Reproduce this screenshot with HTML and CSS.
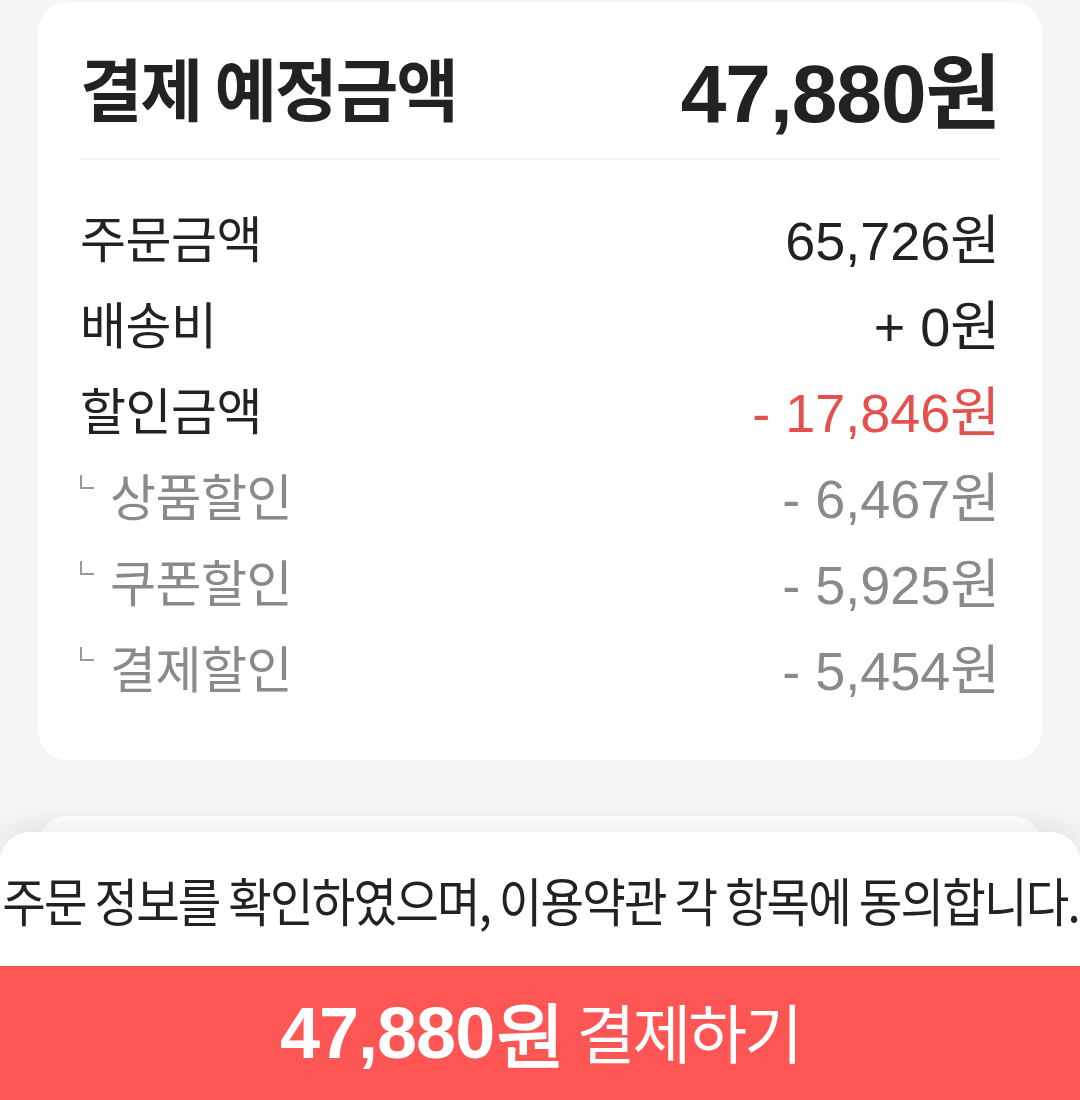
FILE: index.html
```html
<!DOCTYPE html>
<html>
    <head lang="ko">
        <meta charset="UTF-8">
        <title>결제</title>
        <link rel="stylesheet" href="styles.css">
    </head>
    <body>
        <div id="page">
            <div class="card">
                <div class="total">
                    <span class="total-label">결제 예정금액</span>
                    <span class="total-price">47,880원</span>
                </div>
                <ul class="list">
                    <li><span class="name">주문금액</span><span class="price">65,726원</span></li>
                    <li><span class="name">배송비</span><span class="price">+ 0원</span></li>
                    <li class="sale"><span class="name">할인금액</span><span class="price">- 17,846원</span></li>
                    <li class="sub"><span class="name"><i class="mark"></i>상품할인</span><span class="price">- 6,467원</span></li>
                    <li class="sub"><span class="name"><i class="mark"></i>쿠폰할인</span><span class="price">- 5,925원</span></li>
                    <li class="sub"><span class="name"><i class="mark"></i>결제할인</span><span class="price">- 5,454원</span></li>
                </ul>
            </div>
            <div class="card next"></div>
        </div>
        <div id="sheet">
            <p class="agree"><span>주문 정보를 확인하였으며, 이용약관 각 항목에 동의합니다.</span></p>
            <button class="pay"><b>47,880원</b> 결제하기</button>
        </div>
    </body>
</html>
```

FILE: styles.css
```css
*{
    margin:0;
    padding:0;
    box-sizing:border-box;
}
ul{
    list-style:none;
}
html,body{
    height:1100px;
    overflow:hidden;
}
body{
    background:#f5f5f5;
    font-family:"Liberation Sans","Noto Sans CJK KR",sans-serif;
    color:#222;
}
#page{
    padding:2px 38px 0;
    display:flex;
    flex-direction:column;
    gap:56px;
}
.card{
    background:#fff;
    border-radius:30px;
    padding:0 42px 51px 42px;
}
.card.next{
    height:300px;
}
.total{
    display:flex;
    justify-content:space-between;
    align-items:center;
    height:158px;
    padding-top:12px;
    border-bottom:2px solid #f2f2f2;
}
.total-label{
    font-family:"Noto Sans CJK KR",sans-serif;
    font-size:68px;
    font-weight:700;
    letter-spacing:-2px;
}
.total-price{
    font-size:82px;
    font-weight:700;
    letter-spacing:-1px;
}
.list{
    padding-top:33px;
}
.list li{
    display:flex;
    justify-content:space-between;
    align-items:center;
    height:86px;
    font-size:54px;
}
.list .name{
    font-family:"Noto Sans CJK KR",sans-serif;
    font-size:50px;
    letter-spacing:-0.5px;
    display:flex;
    align-items:center;
}
.list .sale .price{
    color:#e5504f;
}
.list .sub{
    color:#8a8a8a;
}
.mark{
    width:14px;
    height:14px;
    border-left:2px solid #999;
    border-bottom:2px solid #999;
    margin:0 16px 24px 0;
}
#sheet{
    position:fixed;
    left:0;
    right:0;
    bottom:0;
    height:268px;
    background:#fff;
    border-radius:30px 30px 0 0;
    box-shadow:0 -8px 26px rgba(0,0,0,0.07);
    display:flex;
    flex-direction:column;
}
.agree{
    height:134px;
    display:flex;
    align-items:center;
    justify-content:center;
    overflow:hidden;
}
.agree span{
    display:inline-block;
    white-space:nowrap;
    font-family:"Noto Sans CJK KR",sans-serif;
    font-size:52px;
    letter-spacing:-2px;
    transform:scaleX(0.91);
}
.pay{
    height:134px;
    border:none;
    background:#fd5655;
    color:#fff;
    font-family:"Noto Sans CJK KR",sans-serif;
    font-size:64px;
    letter-spacing:-3px;
}
.pay b{
    font-family:"Liberation Sans",sans-serif;
    font-size:72px;
    letter-spacing:-1px;
}
```
